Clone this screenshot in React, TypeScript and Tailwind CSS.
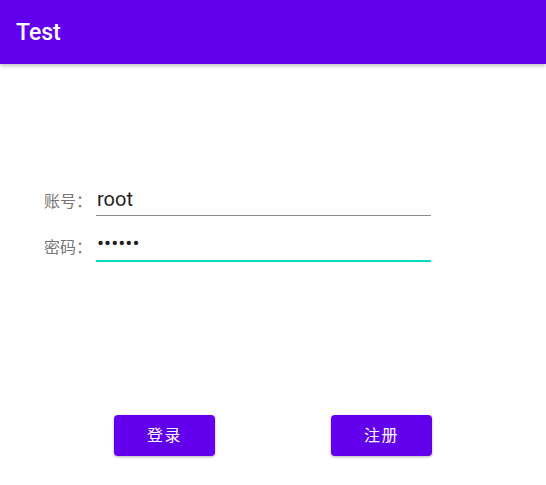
import React from "react";

export default function App() {
  const font = { fontFamily: 'Roboto, "Noto Sans CJK SC", sans-serif' };
  return (
    <div className="w-[546px] h-[485px] bg-white relative overflow-hidden" style={font}>
      <div className="h-16 bg-[#6200EE] flex items-center pl-4 shadow-[0_2px_4px_rgba(0,0,0,0.25)] relative z-10">
        <span className="text-white text-[23px] font-medium mt-[2px]">Test</span>
      </div>
      <div className="mt-[120px] flex flex-col gap-[14px]">
        <div className="flex items-center pl-[44px]">
          <span className="w-[52px] text-[16px] text-[#757575] pt-[3px]">账号：</span>
          <div className="w-[335px] h-[32px] border-b border-[#8a8a8a] flex items-center pl-[1px]">
            <span className="text-[20px] text-[#1f1f1f] leading-none -mt-[2px]">root</span>
          </div>
        </div>
        <div className="flex items-center pl-[44px]">
          <span className="w-[52px] text-[16px] text-[#757575] pt-[3px]">密码：</span>
          <div className="w-[335px] h-[32px] border-b-2 border-[#03DAC5] flex items-center pl-[1px]">
            <span className="text-[21px] text-[#1f1f1f] leading-none -mt-[3px]">••••••</span>
          </div>
        </div>
      </div>
      <div className="mt-[153px] flex pl-[114px] gap-[116px]">
        <button className="w-[101px] h-[41px] rounded bg-[#6200EE] text-white text-[16px] tracking-[0.1em] shadow-[0_1px_3px_rgba(0,0,0,0.3)]">
          登录
        </button>
        <button className="w-[101px] h-[41px] rounded bg-[#6200EE] text-white text-[16px] tracking-[0.1em] shadow-[0_1px_3px_rgba(0,0,0,0.3)]">
          注册
        </button>
      </div>
    </div>
  );
}
